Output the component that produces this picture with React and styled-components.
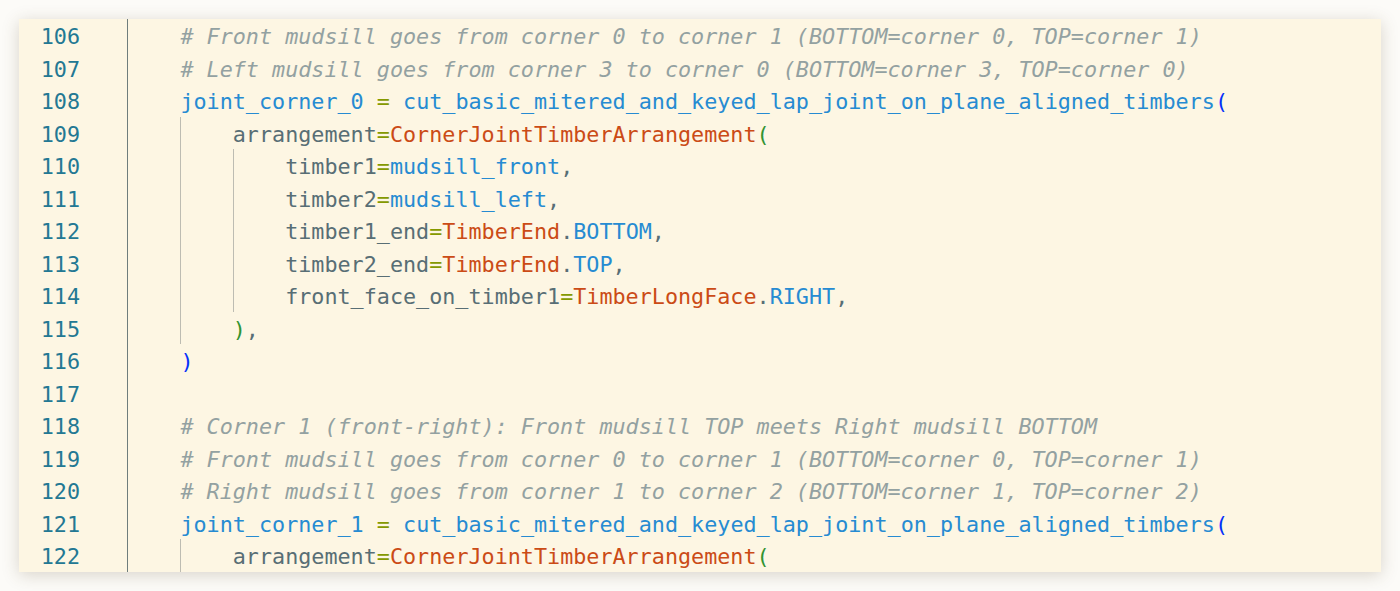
import React from 'react'
import styled, { createGlobalStyle } from 'styled-components'

const GlobalStyle = createGlobalStyle`
  html, body {
    margin: 0;
    padding: 0;
    background: #fcfbf8;
  }
  body {
    font-family: "DejaVu Sans Mono", "Liberation Mono", monospace;
  }
`

const colors = {
  c: '#93a1a1',
  v: '#268bd2',
  o: '#859900',
  k: '#cb4b16',
  p: '#586e75',
  x: '#586e75',
  b1: '#0431fa',
  b2: '#319331',
}

const lines = [
  { n: 106, indent: 1, toks: [['c', '# Front mudsill goes from corner 0 to corner 1 (BOTTOM=corner 0, TOP=corner 1)']] },
  { n: 107, indent: 1, toks: [['c', '# Left mudsill goes from corner 3 to corner 0 (BOTTOM=corner 3, TOP=corner 0)']] },
  { n: 108, indent: 1, toks: [['v', 'joint_corner_0'], ['x', ' '], ['o', '='], ['x', ' '], ['v', 'cut_basic_mitered_and_keyed_lap_joint_on_plane_aligned_timbers'], ['b1', '(']] },
  { n: 109, indent: 2, toks: [['p', 'arrangement'], ['o', '='], ['k', 'CornerJointTimberArrangement'], ['b2', '(']] },
  { n: 110, indent: 3, toks: [['p', 'timber1'], ['o', '='], ['v', 'mudsill_front'], ['x', ',']] },
  { n: 111, indent: 3, toks: [['p', 'timber2'], ['o', '='], ['v', 'mudsill_left'], ['x', ',']] },
  { n: 112, indent: 3, toks: [['p', 'timber1_end'], ['o', '='], ['k', 'TimberEnd'], ['x', '.'], ['v', 'BOTTOM'], ['x', ',']] },
  { n: 113, indent: 3, toks: [['p', 'timber2_end'], ['o', '='], ['k', 'TimberEnd'], ['x', '.'], ['v', 'TOP'], ['x', ',']] },
  { n: 114, indent: 3, toks: [['p', 'front_face_on_timber1'], ['o', '='], ['k', 'TimberLongFace'], ['x', '.'], ['v', 'RIGHT'], ['x', ',']] },
  { n: 115, indent: 2, toks: [['b2', ')'], ['x', ',']] },
  { n: 116, indent: 1, toks: [['b1', ')']] },
  { n: 117, indent: 0, toks: [] },
  { n: 118, indent: 1, toks: [['c', '# Corner 1 (front-right): Front mudsill TOP meets Right mudsill BOTTOM']] },
  { n: 119, indent: 1, toks: [['c', '# Front mudsill goes from corner 0 to corner 1 (BOTTOM=corner 0, TOP=corner 1)']] },
  { n: 120, indent: 1, toks: [['c', '# Right mudsill goes from corner 1 to corner 2 (BOTTOM=corner 1, TOP=corner 2)']] },
  { n: 121, indent: 1, toks: [['v', 'joint_corner_1'], ['x', ' '], ['o', '='], ['x', ' '], ['v', 'cut_basic_mitered_and_keyed_lap_joint_on_plane_aligned_timbers'], ['b1', '(']] },
  { n: 122, indent: 2, toks: [['p', 'arrangement'], ['o', '='], ['k', 'CornerJointTimberArrangement'], ['b2', '(']] },
]

function App() {
  return (
    <>
      <GlobalStyle />
      <Page>
        <Editor>
          <Gutter>
            {lines.map((l) => (
              <LineNo key={l.n}>{l.n}</LineNo>
            ))}
          </Gutter>
          <Code>
            {lines.map((l) => (
              <Row key={l.n}>
                {Array.from({ length: l.indent }).map((_, i) => (
                  <Indent key={i} $guide={i > 0} />
                ))}
                <Text>
                  {l.toks.map(([kind, str], i) => (
                    <Tok key={i} $kind={kind}>{str}</Tok>
                  ))}
                </Text>
              </Row>
            ))}
          </Code>
        </Editor>
      </Page>
    </>
  )
}

const Page = styled.div`
  padding: 19px;
  height: 591px;
  box-sizing: border-box;
`

const Editor = styled.div`
  display: flex;
  height: 553px;
  background: #fdf6e3;
  box-shadow: 0 3px 16px rgba(90, 75, 40, 0.22);
  overflow: hidden;
  font-size: 21.75px;
`

const Gutter = styled.div`
  width: 109px;
  flex-shrink: 0;
  box-sizing: border-box;
  padding-right: 47px;
  border-right: 1px solid #6f7d7d;
  text-align: right;
`

const LineNo = styled.div`
  height: 32.5px;
  box-sizing: border-box;
  padding-top: 2px;
  line-height: 32.5px;
  color: #237893;
`

const Code = styled.div`
  flex: 1;
  display: flex;
  flex-direction: column;
`

const Row = styled.div`
  display: flex;
  align-items: stretch;
  height: 32.5px;
  white-space: pre;
`

const Indent = styled.span`
  width: 4ch;
  flex-shrink: 0;
  box-sizing: border-box;
  border-left: 1px solid ${(p) => (p.$guide ? '#bdbcb2' : 'transparent')};
`

const Text = styled.span`
  display: block;
  padding-top: 2px;
  line-height: 32.5px;
`

const Tok = styled.span`
  color: ${(p) => colors[p.$kind]};
  font-style: ${(p) => (p.$kind === 'c' ? 'italic' : 'normal')};
`

export default App
